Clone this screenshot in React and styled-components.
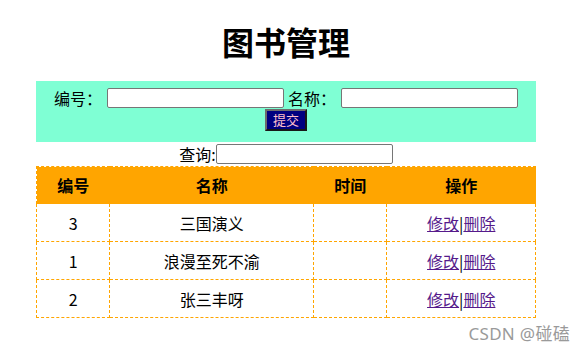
import React from 'react';
import styled, { createGlobalStyle } from 'styled-components';

const GlobalStyle = createGlobalStyle`
  body {
    margin: 0;
    background: #fff;
    font-family: "Noto Sans CJK SC", "Noto Sans", sans-serif;
    color: #000;
  }
`;

const Page = styled.div`
  width: 500px;
  margin-left: 36px;
  height: 356px;
  position: relative;
`;

const Title = styled.h1`
  margin: 0;
  padding-top: 19px;
  height: 81px;
  box-sizing: border-box;
  text-align: center;
  font-size: 32px;
  font-weight: 700;
  line-height: 44px;
`;

const FormPanel = styled.form`
  background: #7fffd4;
  height: 61px;
  padding-top: 6px;
  box-sizing: border-box;
  display: flex;
  flex-direction: column;
  align-items: center;
`;

const FieldRow = styled.div`
  display: flex;
  align-items: center;
  height: 22px;
  font-size: 16px;
`;

const Label = styled.label`
  margin-left: ${props => props.gap || 0}px;
  margin-right: 5px;
  white-space: nowrap;
`;

const TextInput = styled.input`
  width: 177px;
  height: 20px;
  box-sizing: border-box;
  border: 1px solid #767676;
  border-radius: 2px;
  padding: 0 2px;
  background: #fff;
`;

const SubmitButton = styled.button`
  width: 42px;
  height: 22px;
  box-sizing: border-box;
  background: #000080;
  color: #ffc0cb;
  border: 2px outset #6d6d6d;
  font-family: "Noto Sans CJK SC", sans-serif;
  font-size: 13px;
  padding: 0;
  line-height: 16px;
`;

const SearchRow = styled.div`
  display: flex;
  justify-content: center;
  align-items: center;
  height: 24px;
  font-size: 16px;
`;

const Table = styled.table`
  width: 500px;
  border-collapse: collapse;
  border: 1px dashed #ffa500;
  font-size: 16px;
  text-align: center;
`;

const HeadCell = styled.th`
  background: #ffa500;
  height: 36px;
  font-weight: 700;
  font-size: 16px;
  border: 1px dashed #ffa500;
  padding: 0;
  width: ${props => props.w}px;
`;

const Cell = styled.td`
  height: 37px;
  border: 1px dashed #ffa500;
  padding: 0;
`;

const Link = styled.a`
  color: #551a8b;
  text-decoration: underline;
  cursor: pointer;
`;

const Watermark = styled.div`
  position: absolute;
  right: -34px;
  top: 320px;
  font-family: "Noto Sans", "Noto Sans CJK SC", sans-serif;
  font-size: 17px;
  color: #9a9a9a;
  letter-spacing: 0.3px;
`;

const books = [
  { id: 3, name: '三国演义' },
  { id: 1, name: '浪漫至死不渝' },
  { id: 2, name: '张三丰呀' },
];

export default function App() {
  return (
    <Page>
      <GlobalStyle />
      <Title>图书管理</Title>
      <FormPanel onSubmit={e => e.preventDefault()}>
        <FieldRow>
          <Label>编号：</Label>
          <TextInput type="text" />
          <Label gap={4}>名称：</Label>
          <TextInput type="text" />
        </FieldRow>
        <SubmitButton type="submit">提交</SubmitButton>
      </FormPanel>
      <SearchRow>
        查询:<TextInput type="text" />
      </SearchRow>
      <Table>
        <thead>
          <tr>
            <HeadCell w={73}>编号</HeadCell>
            <HeadCell w={205}>名称</HeadCell>
            <HeadCell w={73}>时间</HeadCell>
            <HeadCell w={149}>操作</HeadCell>
          </tr>
        </thead>
        <tbody>
          {books.map(book => (
            <tr key={book.id}>
              <Cell>{book.id}</Cell>
              <Cell>{book.name}</Cell>
              <Cell></Cell>
              <Cell>
                <Link>修改</Link>|<Link>删除</Link>
              </Cell>
            </tr>
          ))}
        </tbody>
      </Table>
      <Watermark>CSDN @碰磕</Watermark>
    </Page>
  );
}
